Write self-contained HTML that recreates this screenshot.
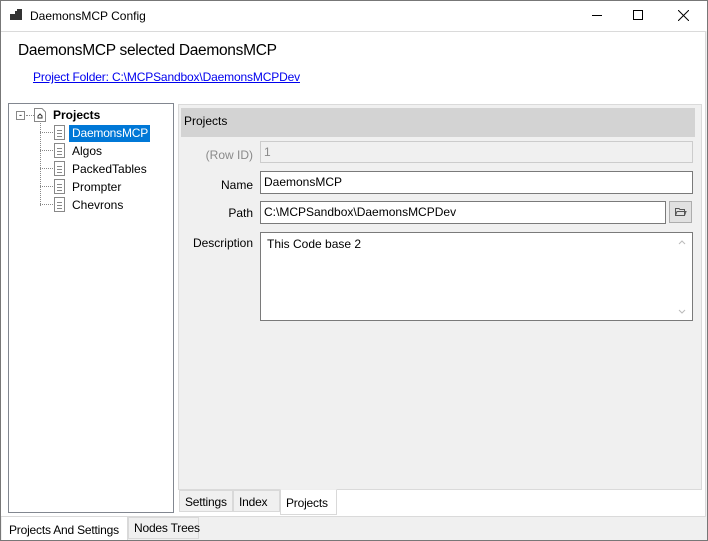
<!DOCTYPE html>
<html><head><style>
*{box-sizing:border-box;margin:0;padding:0}
body{width:708px;height:541px;position:relative;background:#f0f0f0;font-family:"Liberation Sans",sans-serif;font-size:12px;color:#000;overflow:hidden;white-space:nowrap}
.a{position:absolute}
.lbl{position:absolute;right:455px;text-align:right}
.inp{position:absolute;background:#fff;border:1px solid #7a7a7a;padding:3px 0 0 3px;font-size:12px}
.tab{position:absolute;padding:4px 5px 0 5px;border:1px solid #d9d9d9;background:#f0f0f0;letter-spacing:-0.2px}
</style></head><body>
<div class="a" style="left:0;top:0;width:708px;height:541px;border:1px solid #777;"></div>
<div class="a" style="left:1px;top:1px;width:706px;height:30px;background:#fff"></div>
<svg class="a" style="left:10px;top:9px" width="14" height="14"><rect x="0" y="5" width="5" height="6" fill="#333"/><rect x="5" y="2" width="7" height="9" fill="#333"/><rect x="7" y="0" width="5" height="3" fill="#333"/></svg>
<div class="a" style="left:30px;top:9px">DaemonsMCP Config</div>
<div class="a" style="left:592px;top:15px;width:10px;height:1px;background:#000"></div>
<div class="a" style="left:633px;top:10px;width:10px;height:10px;border:1px solid #000"></div>
<svg class="a" style="left:678px;top:10px" width="11" height="11"><path d="M0 0L11 11M11 0L0 11" stroke="#000" stroke-width="1"/></svg>
<div class="a" style="left:1px;top:31px;width:705px;height:486px;background:#fff;border-top:1px solid #dadada;border-right:1px solid #dadada;border-bottom:1px solid #dadada"></div>
<div class="a" style="left:18px;top:42px;font-size:15.5px;letter-spacing:-0.3px">DaemonsMCP selected DaemonsMCP</div>
<div class="a" style="left:33px;top:70px;color:#0000ee;text-decoration:underline;letter-spacing:-0.15px">Project Folder: C:\MCPSandbox\DaemonsMCPDev</div>
<!-- tree -->
<div class="a" style="left:8px;top:103px;width:166px;height:410px;border:1px solid #828790;background:#fff"></div>
<div class="a" style="left:16px;top:111px;width:9px;height:9px;border:1px solid #888;font-size:9px;line-height:6px;text-align:center">-</div>
<div class="a" style="left:26px;top:115px;width:8px;border-top:1px dotted #888"></div>
<svg class="a" style="left:34px;top:108px" width="12" height="14"><path d="M0.5 0.5H8L11.5 4V13.5H0.5Z" fill="#fff" stroke="#888"/><path d="M4 8L6 6L8 8V10H4Z" fill="none" stroke="#333"/></svg>
<div class="a" style="left:53px;top:108px;font-weight:bold">Projects</div>
<div class="a" style="left:40px;top:123px;height:83px;border-left:1px dotted #888"></div>
<div class="a" style="left:69px;top:125px;width:81px;height:17px;background:#0078d7"></div>
<svg class="a" style="left:40px;top:124px" width="30" height="100">
<g stroke="#888" fill="#fff">
<path d="M0 8.5H13" stroke-dasharray="1 1"/><path d="M0 26.5H13" stroke-dasharray="1 1"/><path d="M0 44.5H13" stroke-dasharray="1 1"/><path d="M0 62.5H13" stroke-dasharray="1 1"/><path d="M0 80.5H13" stroke-dasharray="1 1"/>
<path d="M14.5 1.5H24.5V15.5H14.5Z"/><path d="M14.5 19.5H24.5V33.5H14.5Z"/><path d="M14.5 37.5H24.5V51.5H14.5Z"/><path d="M14.5 55.5H24.5V69.5H14.5Z"/><path d="M14.5 73.5H24.5V87.5H14.5Z"/>
<path d="M17 6.5H22M17 9.5H22M17 12.5H22M17 24.5H22M17 27.5H22M17 30.5H22M17 42.5H22M17 45.5H22M17 48.5H22M17 60.5H22M17 63.5H22M17 66.5H22M17 78.5H22M17 81.5H22M17 84.5H22"/>
</g></svg>
<div class="a" style="left:72px;top:126px;color:#fff;letter-spacing:-0.2px">DaemonsMCP</div>
<div class="a" style="left:72px;top:144px">Algos</div>
<div class="a" style="left:72px;top:162px">PackedTables</div>
<div class="a" style="left:72px;top:180px">Prompter</div>
<div class="a" style="left:72px;top:198px">Chevrons</div>
<!-- right panel -->
<div class="a" style="left:178px;top:104px;width:524px;height:386px;border:1px solid #dadada;background:#f0f0f0"></div>
<div class="a" style="left:181px;top:108px;width:514px;height:29px;background:#d3d3d3;padding:6px 0 0 3px">Projects</div>
<div class="lbl" style="top:148px;color:#8a8a8a">(Row ID)</div>
<div class="inp" style="left:260px;top:141px;width:433px;height:22px;background:#f0f0f0;border-color:#ccc;color:#8a8a8a">1</div>
<div class="lbl" style="top:178px">Name</div>
<div class="inp" style="left:260px;top:171px;width:433px;height:23px">DaemonsMCP</div>
<div class="lbl" style="top:206px">Path</div>
<div class="inp" style="left:260px;top:201px;width:406px;height:23px">C:\MCPSandbox\DaemonsMCPDev</div>
<div class="a" style="left:669px;top:201px;width:23px;height:22px;border:1px solid #adadad;background:#e1e1e1"></div>
<svg class="a" style="left:675px;top:207px" width="12" height="10"><path d="M0.5 1.5H4L5 2.5H9.5V8.5H0.5Z M0.5 8.5L2 4.5H11L9.5 8.5" fill="none" stroke="#555"/></svg>
<div class="lbl" style="top:236px">Description</div>
<div class="inp" style="left:260px;top:232px;width:433px;height:89px;padding:4px 0 0 6px">This Code base 2</div>
<svg class="a" style="left:678px;top:239px" width="8" height="80"><path d="M1 5L4 2L7 5M1 71L4 74L7 71" fill="none" stroke="#bbb"/></svg>
<!-- inner tabs -->
<div class="tab" style="left:179px;top:490px;width:54px;height:22px">Settings</div>
<div class="tab" style="left:233px;top:490px;width:47px;height:22px">Index</div>
<div class="tab" style="left:280px;top:489px;width:57px;height:26px;background:#fff;border-top-color:#eee;padding-top:6px">Projects</div>
<!-- outer tabs -->
<div class="tab" style="left:2px;top:517px;width:126px;height:23px;background:#fff;border:none;border-right:1px solid #d9d9d9;padding-top:6px;padding-left:7px">Projects And Settings</div>
<div class="tab" style="left:128px;top:517px;width:71px;height:22px;padding-top:3px">Nodes Trees</div>
</body></html>
